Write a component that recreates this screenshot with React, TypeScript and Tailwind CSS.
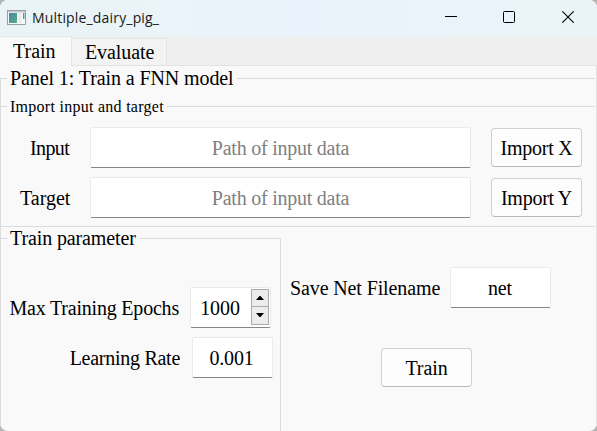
import type { ReactNode } from "react";

function Field({ className, children }: { className: string; children: ReactNode }) {
  return (
    <div
      className={`box-border flex h-[41px] shrink-0 items-center justify-center rounded-[2px] border border-[#ebebeb] border-b-[#868686] bg-white ${className}`}
    >
      {children}
    </div>
  );
}

function PushButton({ className, children }: { className: string; children: ReactNode }) {
  return (
    <button
      className={`flex h-[39px] w-[91px] shrink-0 items-center justify-center rounded-[4px] border border-[#d0d0d0] border-b-[#bababa] bg-[#fdfdfd] ${className}`}
    >
      {children}
    </button>
  );
}

function PathRow({ label, action, pad }: { label: string; action: string; pad: string }) {
  return (
    <div className="flex h-[41px] items-center">
      <span className={`w-[90px] shrink-0 ${pad}`}>{label}</span>
      <Field className="w-[381px] text-[#808080]">
        <span className="tracking-[-0.24px]">Path of input data</span>
      </Field>
      <PushButton className="ml-5 tracking-[-0.25px]">{action}</PushButton>
    </div>
  );
}

function TitleBar() {
  return (
    <header className="flex h-9 items-center bg-gradient-to-r from-[#eaf4f6] via-[#eaf3fb] to-[#eaf4f8]">
      <svg className="-mt-px ml-[7px] shrink-0" width="19" height="16" viewBox="0 0 19 16">
        <defs>
          <linearGradient id="pane" x1="0" y1="0" x2="1" y2="1">
            <stop offset="0" stopColor="#4d83a8" />
            <stop offset="1" stopColor="#51b086" />
          </linearGradient>
        </defs>
        <rect x="0.5" y="0.5" width="18" height="14" fill="#f8f8f8" stroke="#9a9fa5" />
        <rect x="1" y="1" width="17" height="1.5" fill="#c5c9ce" />
        <rect x="2" y="3" width="8" height="10" fill="url(#pane)" />
        <rect x="11.5" y="3" width="3" height="10" fill="#e9e9e9" />
        <rect x="16" y="3" width="1.5" height="6" fill="url(#pane)" />
      </svg>
      <h1 className="ml-1.5 font-['Open_Sans',sans-serif] text-[14px] leading-5 tracking-[0.17px] text-[#1a1a1a]">
        Multiple_dairy_pig_
      </h1>
      <div className="mr-[23px] ml-auto flex items-center gap-[46px]">
        <svg width="12" height="12" viewBox="0 0 12 12">
          <path d="M0 4.5H12" stroke="#000" />
        </svg>
        <svg className="-mt-0.5" width="12" height="12" viewBox="0 0 12 12">
          <rect x="0.5" y="0.5" width="11" height="11" rx="1" fill="none" stroke="#000" />
        </svg>
        <svg className="-mt-0.5 ml-px" width="12" height="12" viewBox="0 0 12 12">
          <path d="M0.3 0.3L11.7 11.7M11.7 0.3L0.3 11.7" stroke="#000" strokeWidth="1.1" />
        </svg>
      </div>
    </header>
  );
}

function SpinBox() {
  return (
    <Field className="w-[81px] pr-px">
      <span className="flex-1 pr-0.5 text-center tracking-[-0.1px]">1000</span>
      <div className="mb-0.5 flex h-[36px] w-[18px] flex-col border border-[#ababab] bg-[#ececec]">
        <div className="flex flex-1 items-center justify-center border-b border-[#ababab]">
          <svg width="8" height="4" viewBox="0 0 8 4">
            <path d="M0 4L3.5 0H4.5L8 4Z" />
          </svg>
        </div>
        <div className="flex flex-1 items-center justify-center">
          <svg width="8" height="4" viewBox="0 0 8 4">
            <path d="M0 0H8L4.5 4H3.5Z" />
          </svg>
        </div>
      </div>
    </Field>
  );
}

export default function App() {
  return (
    <div className="h-[431px] w-[597px] overflow-hidden bg-[#b5b5b5]">
      <div className="flex h-full w-full flex-col overflow-hidden rounded-lg bg-[#f9f9f9] font-['Liberation_Serif',serif] text-[20px] leading-6 whitespace-nowrap text-black">
        <TitleBar />
        <nav className="flex h-[30px] shrink-0 items-end border-b border-[#e3e3e3] bg-[#efefef]">
          <div className="-mb-px flex h-[30px] w-[72px] items-center border-t border-r border-[#e5e5e5] bg-[#f9f9f9] pb-px pl-[13px]">
            Train
          </div>
          <div className="flex h-[27px] w-[95px] items-center border-t border-r border-[#e5e5e5] bg-[#f3f3f3] pl-[13px] tracking-[-0.1px]">
            Evaluate
          </div>
        </nav>
        <main className="flex min-h-0 flex-1 flex-col border-r border-[#e3e3e3]">
          <div className="flex h-6 shrink-0 items-center gap-[3px] pr-px">
            <i className="h-px w-[7px] bg-[#dcdcdc]" />
            <h2 className="tracking-[-0.1px]">Panel 1: Train a FNN model</h2>
            <i className="h-px flex-1 bg-[#dcdcdc]" />
          </div>
          <div className="-mt-3 flex min-h-0 flex-1 flex-col border-l border-[#dcdcdc] pt-3">
            <section className="mr-px h-[137px] shrink-0 border-b border-[#dcdcdc]">
              <div className="flex h-[33px] items-center gap-[3px]">
                <i className="h-px w-1.5 bg-[#dcdcdc]" />
                <h3 className="text-[16px] tracking-[0.27px]">Import input and target</h3>
                <i className="h-px flex-1 bg-[#dcdcdc]" />
              </div>
              <div className="-ml-px flex flex-col gap-[9px] pt-1">
                <PathRow label="Input" action="Import X" pad="pl-[30px] tracking-[-0.6px]" />
                <PathRow label="Target" action="Import Y" pad="pl-[20px]" />
              </div>
            </section>
            <div className="flex min-h-0 flex-1">
              <section className="flex w-[280px] shrink-0 flex-col">
                <div className="flex h-[23px] items-center gap-[3px]">
                  <i className="h-px w-1.5 bg-[#dcdcdc]" />
                  <h3 className="-mt-0.5 tracking-[-0.12px]">Train parameter</h3>
                  <i className="h-px flex-1 bg-[#dcdcdc]" />
                </div>
                <div className="-mt-[11px] flex flex-1 flex-col gap-[9px] border-r border-[#dcdcdc] pt-[48px]">
                  <div className="flex items-center justify-end gap-[11px] pr-[9px]">
                    <span className="tracking-[-0.2px]">Max Training Epochs</span>
                    <SpinBox />
                  </div>
                  <div className="flex items-center justify-end gap-3 pr-[7px]">
                    <span className="tracking-[-0.27px]">Learning Rate</span>
                    <Field className="w-[81px] pr-[2px] tracking-[-0.2px]">0.001</Field>
                  </div>
                </div>
              </section>
              <section className="flex-1 pt-10 pl-[9px]">
                <div className="flex items-center">
                  <label className="w-40 tracking-[-0.12px]">Save Net Filename</label>
                  <Field className="w-[101px] pr-px tracking-[-0.1px]">net</Field>
                </div>
                <PushButton className="mt-10 ml-[91px] tracking-[-0.1px]">Train</PushButton>
              </section>
            </div>
          </div>
        </main>
      </div>
    </div>
  );
}
